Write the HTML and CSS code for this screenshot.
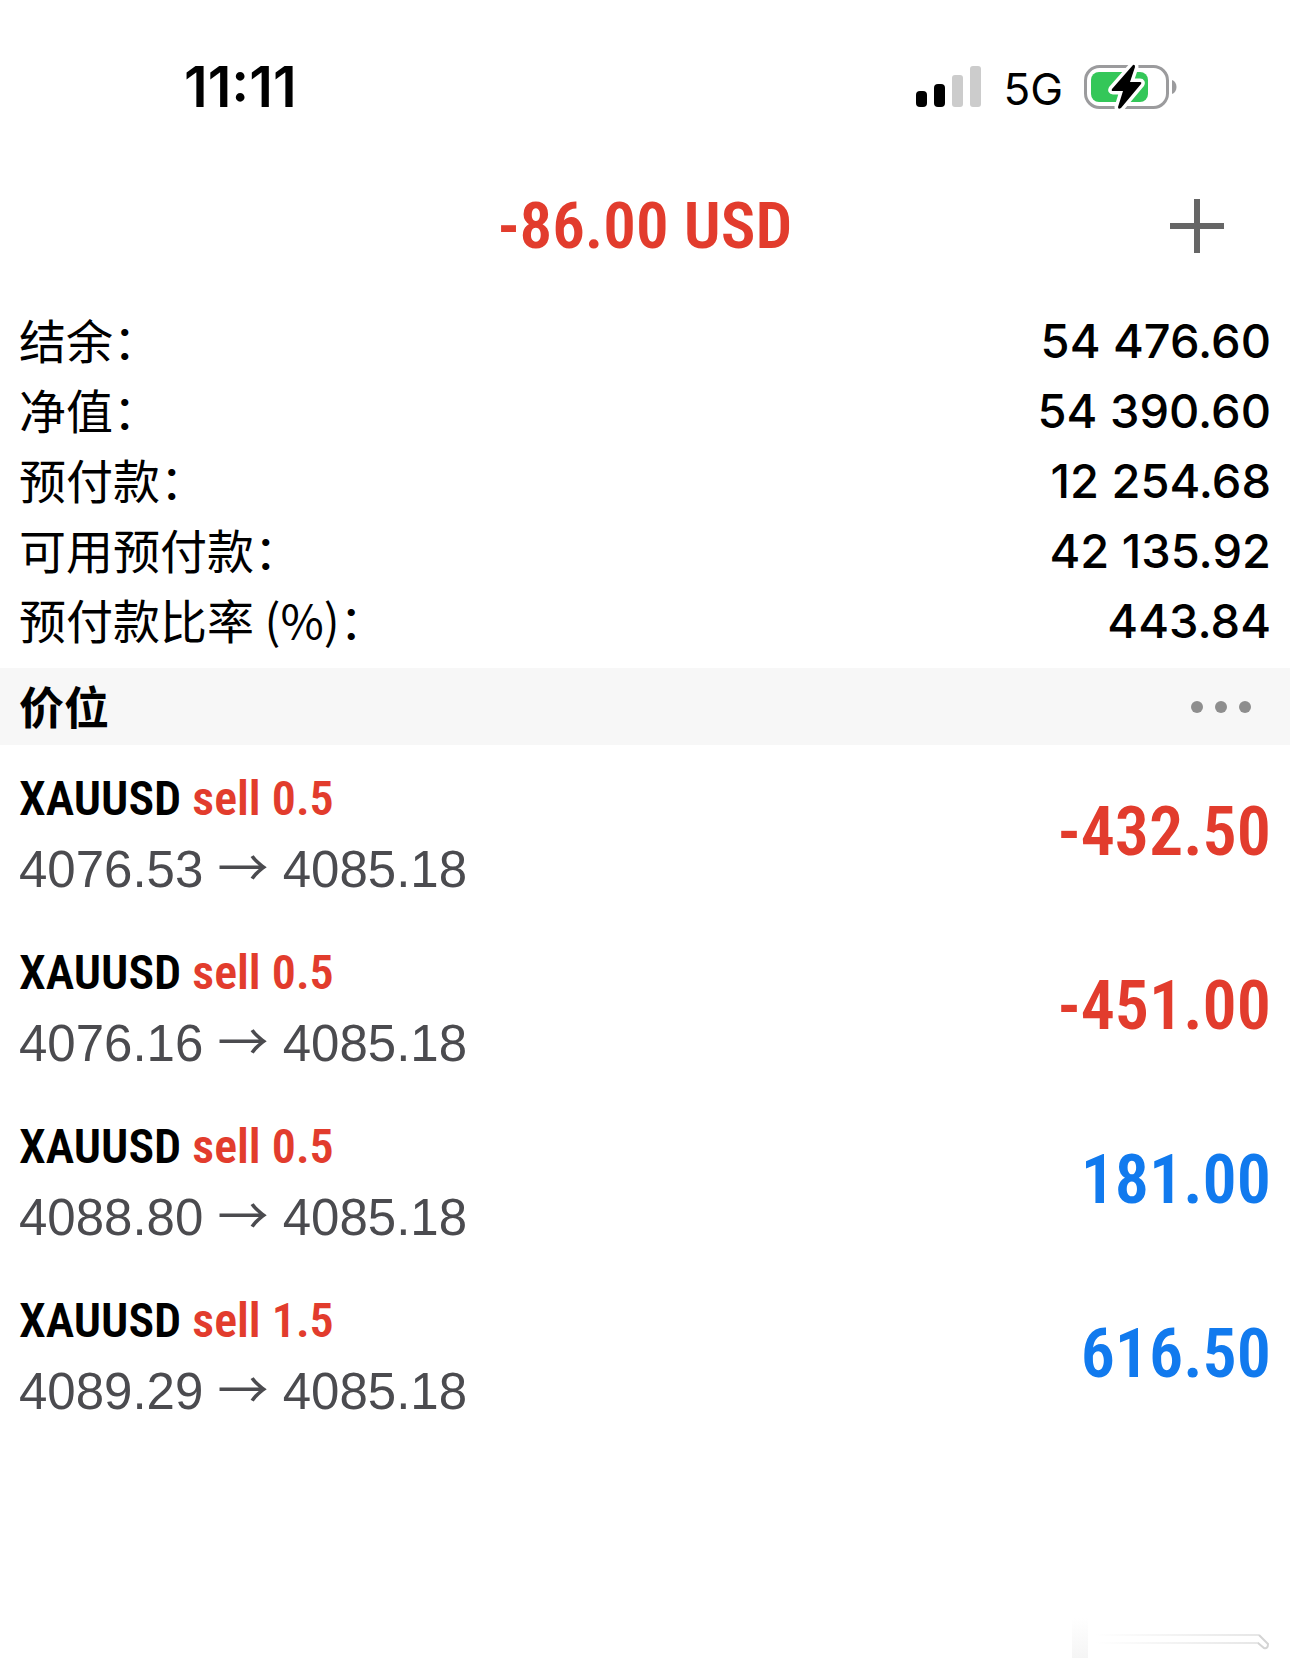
FILE: index.html
```html
<!DOCTYPE html>
<html lang="zh-CN">
<head>
    <meta charset="UTF-8">
    <meta name="viewport" content="width=device-width, initial-scale=1">
    <title>Trade</title>
    <link rel="stylesheet" href="styles.css">
</head>
<body>
    <div class="status-bar">
        <div class="time">11:11</div>
        <div class="status-icons">
            <svg class="signal" width="66" height="42" viewBox="0 0 66 42">
                <rect x="0" y="25" width="11" height="16" rx="4" fill="#000"/>
                <rect x="18" y="18" width="11" height="23" rx="4" fill="#000"/>
                <rect x="36" y="9" width="11" height="32" rx="3" fill="#ccc"/>
                <rect x="54" y="0" width="11" height="41" rx="3" fill="#ccc"/>
            </svg>
            <span class="network">5G</span>
            <svg class="battery" width="94" height="46" viewBox="0 0 94 46">
                <rect x="1.5" y="2.5" width="82" height="41" rx="14" fill="#fff" stroke="#9b9b9d" stroke-width="3"/>
                <path d="M88 16C94 18 94 28 88 30Z" fill="#9b9b9d"/>
                <rect x="7" y="8" width="57" height="30" rx="8" fill="#34c759"/>
                <path d="M49 1L28 25Q27 27 29 27L39 27L34 43Q34 46 37 44L57 20Q58 18 56 18L46 18L51 3Q51 0 49 1Z" fill="#000" stroke="#fff" stroke-width="7" paint-order="stroke"/>
            </svg>
        </div>
    </div>

    <div class="header">
        <h1>-86.00 USD</h1>
        <button class="add" type="button" aria-label="Add">
            <svg width="54" height="54" viewBox="0 0 54 54">
                <path d="M27 0V54M0 27H54" stroke="#666" stroke-width="6"/>
            </svg>
        </button>
    </div>

    <table class="summary">
        <tr><th scope="row">结余：</th><td>54 476.60</td></tr>
        <tr><th scope="row">净值：</th><td>54 390.60</td></tr>
        <tr><th scope="row">预付款：</th><td>12 254.68</td></tr>
        <tr><th scope="row">可用预付款：</th><td>42 135.92</td></tr>
        <tr><th scope="row">预付款比率 (%)：</th><td>443.84</td></tr>
    </table>

    <div class="section">
        <h2>价位</h2>
        <button class="more" type="button" aria-label="More">
            <svg width="60" height="12" viewBox="0 0 60 12" fill="#8e8e8e">
                <circle cx="6" cy="6" r="6"/>
                <circle cx="30" cy="6" r="6"/>
                <circle cx="54" cy="6" r="6"/>
            </svg>
        </button>
    </div>

    <div class="positions">
        <div class="position">
            <div class="details">
                <div class="symbol">XAUUSD <span class="sell">sell 0.5</span></div>
                <div class="price">4076.53 <span class="arrow">→</span> 4085.18</div>
            </div>
            <div class="profit loss">-432.50</div>
        </div>
        <div class="position">
            <div class="details">
                <div class="symbol">XAUUSD <span class="sell">sell 0.5</span></div>
                <div class="price">4076.16 <span class="arrow">→</span> 4085.18</div>
            </div>
            <div class="profit loss">-451.00</div>
        </div>
        <div class="position">
            <div class="details">
                <div class="symbol">XAUUSD <span class="sell">sell 0.5</span></div>
                <div class="price">4088.80 <span class="arrow">→</span> 4085.18</div>
            </div>
            <div class="profit">181.00</div>
        </div>
        <div class="position">
            <div class="details">
                <div class="symbol">XAUUSD <span class="sell">sell 1.5</span></div>
                <div class="price">4089.29 <span class="arrow">→</span> 4085.18</div>
            </div>
            <div class="profit">616.50</div>
        </div>
    </div>

    <!-- faint mark in the corner -->
    <div class="footer">
        <svg width="216" height="52" viewBox="0 0 216 52">
            <defs>
                <linearGradient id="line" x1="0" x2="1">
                    <stop offset="0" stop-color="#fff"/>
                    <stop offset="1" stop-color="#e6e6e6"/>
                </linearGradient>
                <linearGradient id="block" x1="0" y1="0" x2="0" y2="1">
                    <stop offset="0" stop-color="#fff"/>
                    <stop offset="1" stop-color="#f5f5f5"/>
                </linearGradient>
            </defs>
            <rect x="17" y="8" width="16" height="40" fill="url(#block)"/>
            <rect x="40" y="24" width="164" height="2" fill="url(#line)"/>
            <rect x="40" y="32" width="164" height="2" fill="url(#line)"/>
            <path d="M204 25L213 34Q213 39 209 38L203 33" fill="none" stroke="#d4d4d4" stroke-width="2"/>
        </svg>
    </div>
</body>
</html>
```
FILE: styles.css
```css
* {
    box-sizing: border-box;
}
body {
    font-family: Inter, "Noto Sans CJK SC", sans-serif;
    background-color: #fff;
    color: #000;
    margin: 0;
    min-height: 100vh;
    display: flex;
    flex-direction: column;
}
h1, h2 {
    margin: 0;
}
button {
    background: none;
    border: none;
    padding: 0;
    cursor: pointer;
}
svg {
    display: block;
}
.status-bar {
    display: flex;
    align-items: center;
    justify-content: space-between;
    padding: 50px 112px 0 184px;
}
.time {
    font-size: 56px;
    font-weight: 600;
    line-height: 70px;
}
.status-icons {
    display: flex;
    align-items: center;
    gap: 21px;
}
.network {
    font-size: 44px;
    line-height: 70px;
    padding-top: 4px;
}
.header {
    display: grid;
    grid-template-columns: 1fr auto 1fr;
    align-items: center;
    padding: 0 66px;
    height: 104px;
    margin-top: 50px;
}
.header h1 {
    grid-column: 2;
    font-family: "Avenir Next Condensed", "Roboto Condensed", sans-serif;
    font-size: 65px;
    font-weight: 600;
    line-height: 80px;
    color: #e23c2d;
}
.add {
    justify-self: end;
}
.summary {
    width: 100%;
    border-collapse: collapse;
    margin: 28px 0 12px;
}
.summary th, .summary td {
    padding: 0 19px;
    height: 70px;
    line-height: 70px;
    font-size: 47px;
}
.summary th {
    font-family: "Noto Sans CJK SC", sans-serif;
    font-weight: 400;
    line-height: 66px;
    text-align: left;
    vertical-align: top;
}
.summary td {
    font-weight: 500;
    text-align: right;
}
.section {
    display: flex;
    align-items: center;
    justify-content: space-between;
    background-color: #f7f7f7;
    padding: 0 39px 0 19px;
    height: 77px;
}
.section h2 {
    font-size: 45px;
    font-weight: 600;
    line-height: 70px;
    padding-top: 4px;
}
.position {
    display: flex;
    align-items: center;
    justify-content: space-between;
    padding: 13px 19px;
}
.details {
    padding-top: 6px;
}
.symbol {
    font-family: "Avenir Next Condensed", "Roboto Condensed", sans-serif;
    font-size: 48px;
    font-weight: 600;
    line-height: 70px;
}
.sell {
    color: #e23c2d;
}
.price {
    font-family: "Liberation Sans", Arial, sans-serif;
    font-size: 51px;
    line-height: 72px;
    color: #4b4b4f;
}
.arrow {
    font-family: "Noto Sans CJK SC", sans-serif;
    line-height: 1;
}
.profit {
    font-family: "Avenir Next Condensed", "Roboto Condensed", sans-serif;
    font-size: 68px;
    font-weight: 600;
    line-height: 80px;
    color: #117aee;
}
.profit.loss {
    color: #e23c2d;
}
.footer {
    display: flex;
    justify-content: flex-end;
    margin-top: auto;
    padding: 0 19px 10px;
}
```
